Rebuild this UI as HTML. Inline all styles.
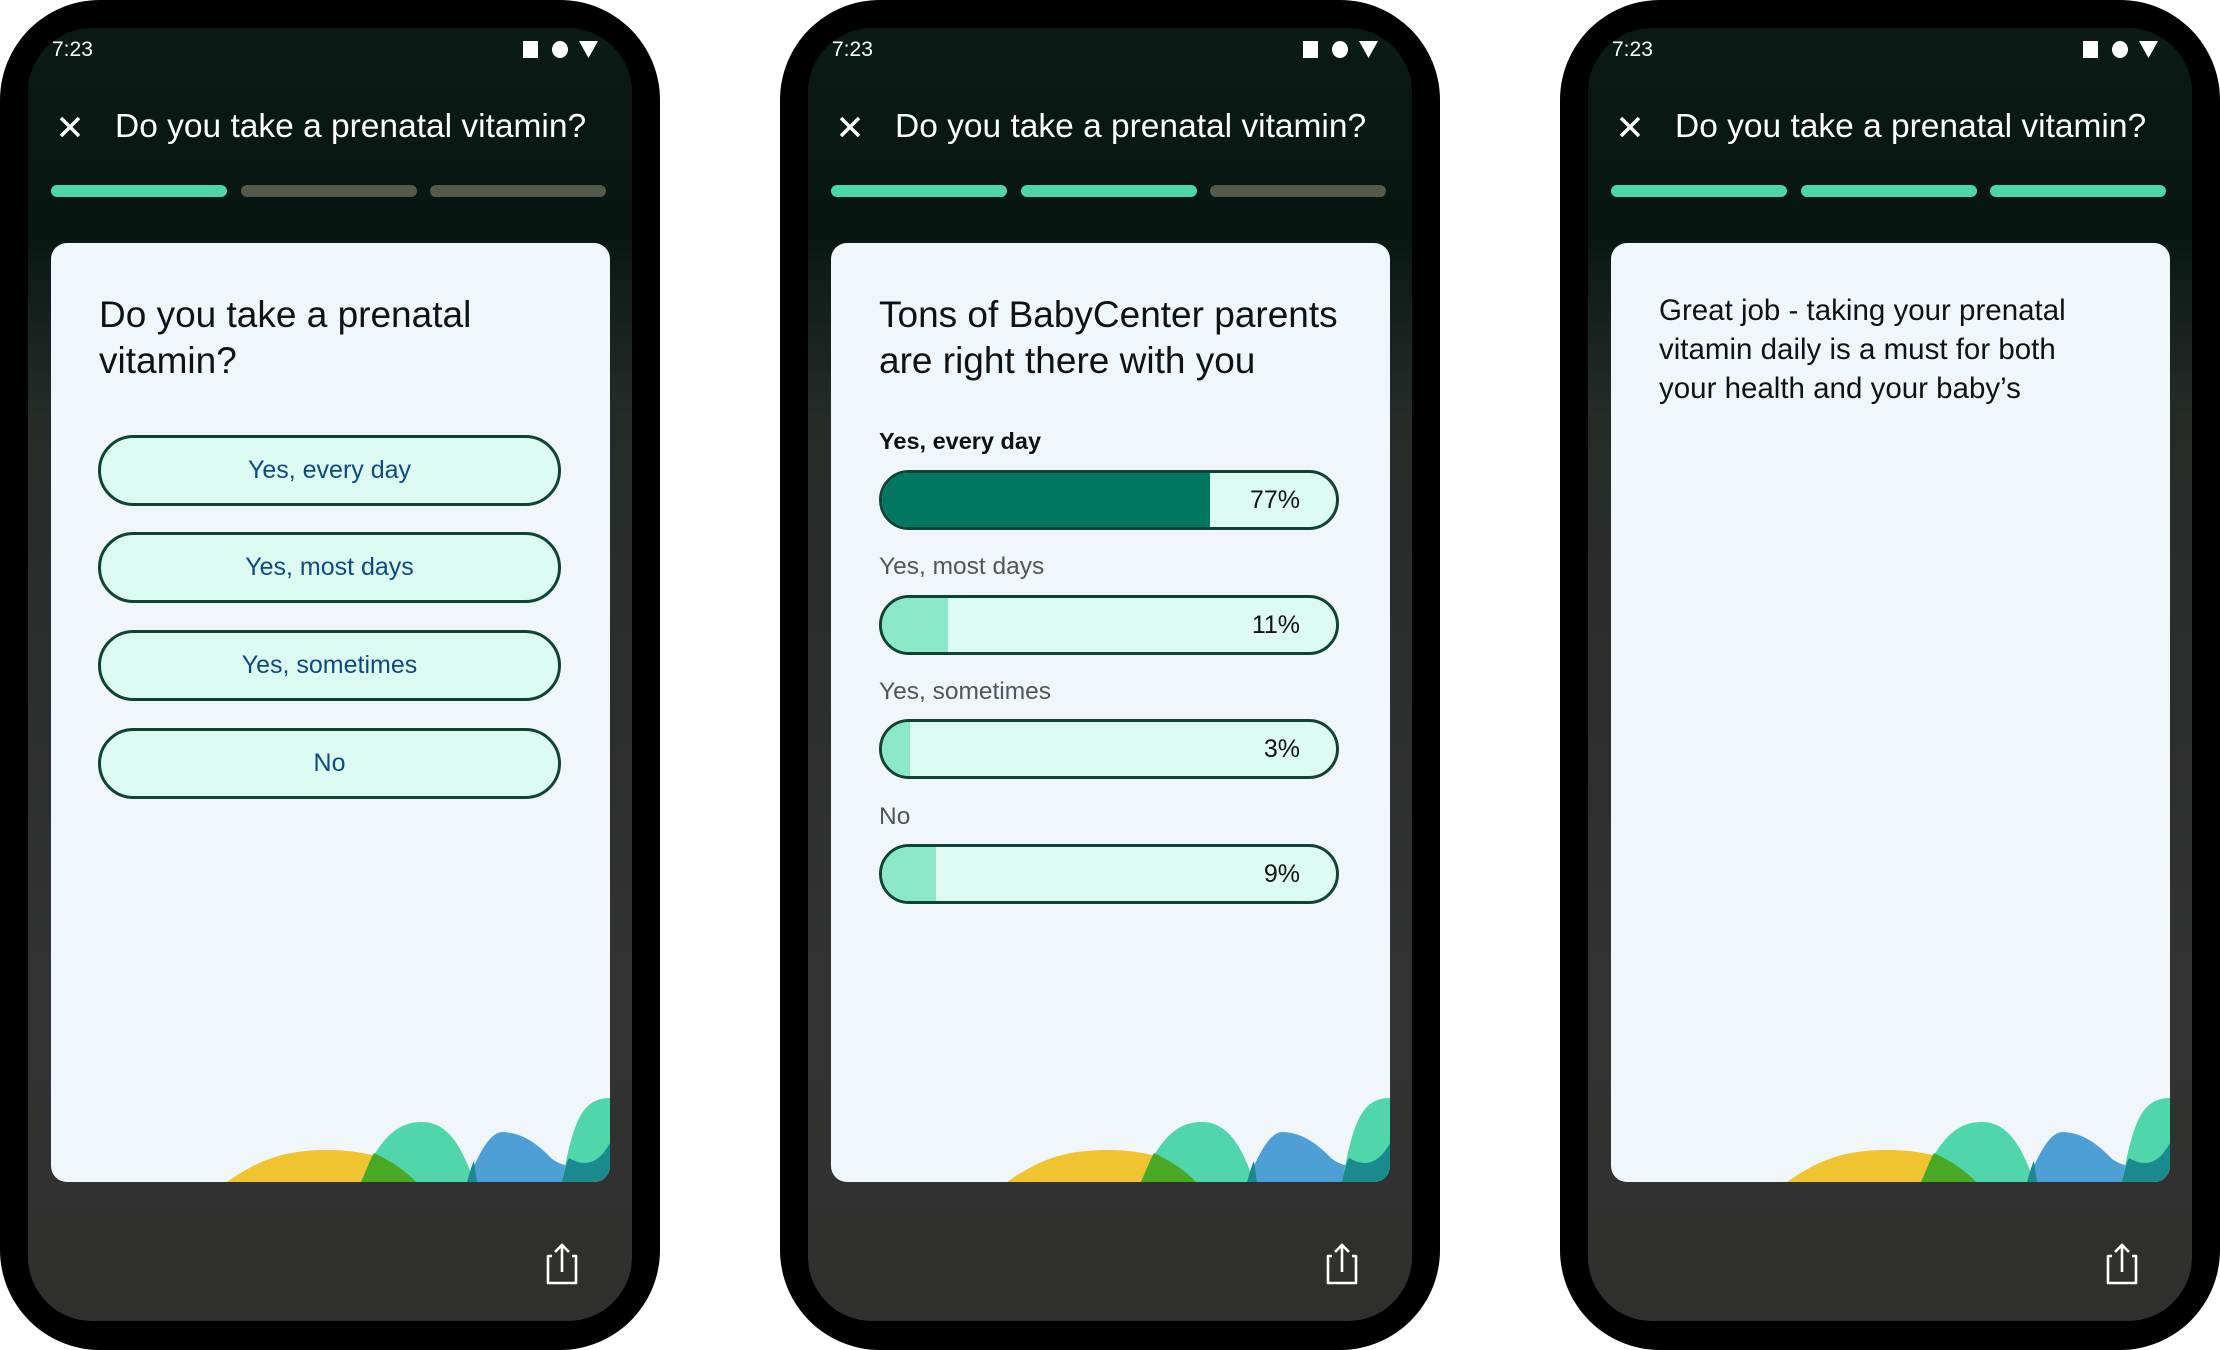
<!DOCTYPE html>
<html><head><meta charset="utf-8"><style>
*{margin:0;padding:0;box-sizing:border-box}
body{width:2220px;height:1350px;background:#fff;position:relative;overflow:hidden;font-family:"Liberation Sans",sans-serif}
.ph{position:absolute;top:0;width:660px;height:1350px}
.frame{position:absolute;left:0;top:0;width:660px;height:1350px;background:#000;border-radius:100px}
.scr{position:absolute;left:28px;top:28px;width:604px;height:1293px;border-radius:64px;overflow:hidden;
background:linear-gradient(180deg,#0b1a15 0%,#081612 16%,#0f1c18 19%,#262b28 30%,#2c2e2d 50%,#323232 75%,#2f302e 100%)}
.time{position:absolute;left:24px;top:10px;color:#fff;font-size:21px;line-height:24px}
.sq{position:absolute;left:495px;top:11px}
.hdr{position:absolute;left:87px;top:79px;color:#fff;font-size:33.5px;line-height:40px;white-space:nowrap}
.x{position:absolute;left:29px;top:86px}
.pb{position:absolute;top:157px;height:12px;width:176px;border-radius:6px;background:#555a4d}
.pb.on{background:#4dd6a8}
.card{position:absolute;left:23px;top:215px;width:559px;height:939px;background:#f0f6fa;border-radius:16px;overflow:hidden}
.ct{position:absolute;left:48px;top:49px;font-size:37px;line-height:46px;color:#111;white-space:nowrap}
.btn{position:absolute;left:47px;width:463px;height:71px;border:3px solid #0f4334;border-radius:36px;background:#dcfcf3;color:#0d4a80;font-size:25px;text-align:center;line-height:65px}
.lab{position:absolute;left:48px;font-size:24.5px;line-height:30px;color:#555;white-space:nowrap}
.bar{position:absolute;left:48px;width:460px;height:60px;border:3px solid #0f4334;border-radius:30px;background:#dcfcf3;overflow:hidden}
.bar i{position:absolute;left:0;top:0;bottom:0;background:#8ae8c9}
.bar span{position:absolute;right:36px;top:0;line-height:54px;font-size:25px;color:#111}
.share{position:absolute;left:517px;top:1214px}
.waves{position:absolute;left:0;top:0}
</style></head><body>

<div class="ph" style="left:0">
<div class="frame"></div>
<div class="scr">
 <div class="time">7:23</div>
 <svg class="sq" width="80" height="22"><rect x="0" y="2" width="15" height="17" fill="#fff"/><ellipse cx="37" cy="10.5" rx="8" ry="8.5" fill="#fff"/><path d="M56 2h19l-9.5 17z" fill="#fff"/></svg>
 <svg class="x" width="26" height="26"><path d="M4 4L22 22M22 4L4 22" stroke="#fff" stroke-width="3.5"/></svg>
 <div class="hdr">Do you take a prenatal vitamin?</div>
 <div class="pb on" style="left:23px"></div><div class="pb" style="left:213px"></div><div class="pb" style="left:402px"></div>
 <div class="card">
  <div class="ct">Do you take a prenatal<br>vitamin?</div>
  <div class="btn" style="top:192px">Yes, every day</div>
  <div class="btn" style="top:289px">Yes, most days</div>
  <div class="btn" style="top:387px">Yes, sometimes</div>
  <div class="btn" style="top:485px">No</div>
  <svg class="waves" width="559" height="939">
   <path d="M176 939C210 915 235 908 272 907C320 906 350 920 380 939Z" fill="#f0c431"/>
   <path d="M310 939C330 890 350 879 371 879C395 879 410 900 423 939Z" fill="#50d6aa"/>
   <path d="M310 939C316 925 320 915 323 910C340 918 355 928 365 939Z" fill="#4aa824"/>
   <path d="M416 939C430 905 440 889 452 889C475 890 490 905 500 915C515 928 540 925 559 905V939Z" fill="#4e9fd6"/>
   <path d="M511 939C522 880 530 855 559 855V939Z" fill="#50d6aa"/>
   <path d="M511 939C514 925 516 918 518 915C535 925 548 920 559 900V939Z" fill="#1a8a8f"/>
   <path d="M416 939C419 928 421 922 423 918C424 925 425 932 426 939Z" fill="#1a8a8f"/>
  </svg>
 </div>
 <svg class="share" width="36" height="44"><path d="M7 14H3v27h28V14h-4" fill="none" stroke="#fff" stroke-width="2.6" stroke-linejoin="round"/><path d="M17 30V3M10 10l7-7 7 7" fill="none" stroke="#fff" stroke-width="2.6"/></svg>
</div></div>

<div class="ph" style="left:780px">
<div class="frame"></div>
<div class="scr">
 <div class="time">7:23</div>
 <svg class="sq" width="80" height="22"><rect x="0" y="2" width="15" height="17" fill="#fff"/><ellipse cx="37" cy="10.5" rx="8" ry="8.5" fill="#fff"/><path d="M56 2h19l-9.5 17z" fill="#fff"/></svg>
 <svg class="x" width="26" height="26"><path d="M4 4L22 22M22 4L4 22" stroke="#fff" stroke-width="3.5"/></svg>
 <div class="hdr">Do you take a prenatal vitamin?</div>
 <div class="pb on" style="left:23px"></div><div class="pb on" style="left:213px"></div><div class="pb" style="left:402px"></div>
 <div class="card">
  <div class="ct">Tons of BabyCenter parents<br>are right there with you</div>
  <div class="lab" style="top:183px;font-weight:bold;color:#111;font-size:23.5px">Yes, every day</div>
  <div class="bar" style="top:227px"><i style="width:328px;background:#007761"></i><span>77%</span></div>
  <div class="lab" style="top:309px">Yes, most days</div>
  <div class="bar" style="top:352px"><i style="width:66px"></i><span>11%</span></div>
  <div class="lab" style="top:434px">Yes, sometimes</div>
  <div class="bar" style="top:476px"><i style="width:28px"></i><span>3%</span></div>
  <div class="lab" style="top:559px">No</div>
  <div class="bar" style="top:601px"><i style="width:54px"></i><span>9%</span></div>
  <svg class="waves" width="559" height="939">
   <path d="M176 939C210 915 235 908 272 907C320 906 350 920 380 939Z" fill="#f0c431"/>
   <path d="M310 939C330 890 350 879 371 879C395 879 410 900 423 939Z" fill="#50d6aa"/>
   <path d="M310 939C316 925 320 915 323 910C340 918 355 928 365 939Z" fill="#4aa824"/>
   <path d="M416 939C430 905 440 889 452 889C475 890 490 905 500 915C515 928 540 925 559 905V939Z" fill="#4e9fd6"/>
   <path d="M511 939C522 880 530 855 559 855V939Z" fill="#50d6aa"/>
   <path d="M511 939C514 925 516 918 518 915C535 925 548 920 559 900V939Z" fill="#1a8a8f"/>
   <path d="M416 939C419 928 421 922 423 918C424 925 425 932 426 939Z" fill="#1a8a8f"/>
  </svg>
 </div>
 <svg class="share" width="36" height="44"><path d="M7 14H3v27h28V14h-4" fill="none" stroke="#fff" stroke-width="2.6" stroke-linejoin="round"/><path d="M17 30V3M10 10l7-7 7 7" fill="none" stroke="#fff" stroke-width="2.6"/></svg>
</div></div>

<div class="ph" style="left:1560px">
<div class="frame"></div>
<div class="scr">
 <div class="time">7:23</div>
 <svg class="sq" width="80" height="22"><rect x="0" y="2" width="15" height="17" fill="#fff"/><ellipse cx="37" cy="10.5" rx="8" ry="8.5" fill="#fff"/><path d="M56 2h19l-9.5 17z" fill="#fff"/></svg>
 <svg class="x" width="26" height="26"><path d="M4 4L22 22M22 4L4 22" stroke="#fff" stroke-width="3.5"/></svg>
 <div class="hdr">Do you take a prenatal vitamin?</div>
 <div class="pb on" style="left:23px"></div><div class="pb on" style="left:213px"></div><div class="pb on" style="left:402px"></div>
 <div class="card">
  <div class="ct" style="font-size:29.5px;line-height:39px;top:48px">Great job - taking your prenatal<br>vitamin daily is a must for both<br>your health and your baby’s</div>
  <svg class="waves" width="559" height="939">
   <path d="M176 939C210 915 235 908 272 907C320 906 350 920 380 939Z" fill="#f0c431"/>
   <path d="M310 939C330 890 350 879 371 879C395 879 410 900 423 939Z" fill="#50d6aa"/>
   <path d="M310 939C316 925 320 915 323 910C340 918 355 928 365 939Z" fill="#4aa824"/>
   <path d="M416 939C430 905 440 889 452 889C475 890 490 905 500 915C515 928 540 925 559 905V939Z" fill="#4e9fd6"/>
   <path d="M511 939C522 880 530 855 559 855V939Z" fill="#50d6aa"/>
   <path d="M511 939C514 925 516 918 518 915C535 925 548 920 559 900V939Z" fill="#1a8a8f"/>
   <path d="M416 939C419 928 421 922 423 918C424 925 425 932 426 939Z" fill="#1a8a8f"/>
  </svg>
 </div>
 <svg class="share" width="36" height="44"><path d="M7 14H3v27h28V14h-4" fill="none" stroke="#fff" stroke-width="2.6" stroke-linejoin="round"/><path d="M17 30V3M10 10l7-7 7 7" fill="none" stroke="#fff" stroke-width="2.6"/></svg>
</div></div>
</body></html>
